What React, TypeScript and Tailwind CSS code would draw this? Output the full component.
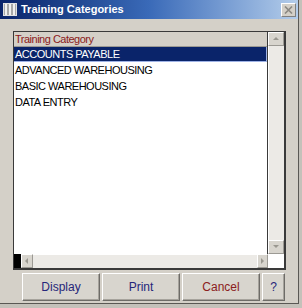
import React from "react";

const categories = ["ACCOUNTS PAYABLE", "ADVANCED WAREHOUSING", "BASIC WAREHOUSING", "DATA ENTRY"];

function Arrow({ dir }: { dir: "up" | "down" | "left" | "right" }) {
  const points = {
    up: "1,5 4,2 7,5",
    down: "1,2 4,5 7,2",
    left: "5,1 2,4 5,7",
    right: "2,1 5,4 2,7",
  }[dir];
  return (
    <svg width="8" height="8" viewBox="0 0 8 8">
      <polygon points={points} fill="#9a9890" />
    </svg>
  );
}

function ScrollButton({ dir, className }: { dir: "up" | "down" | "left" | "right"; className: string }) {
  return (
    <div
      className={`flex items-center justify-center border border-t-white border-l-white border-r-[#9c9a94] border-b-[#9c9a94] bg-[#d8d5ce] ${className}`}
    >
      <Arrow dir={dir} />
    </div>
  );
}

function DialogButton({ label, width, color }: { label: string; width: string; color: string }) {
  return (
    <button
      type="button"
      className={`flex h-[28px] items-center justify-center border border-t-white border-l-white border-r-[#6e6c68] border-b-[#6e6c68] bg-[#d8d5ce] text-[12px] shadow-[inset_-1px_-1px_0_#a6a39c] ${width} ${color}`}
    >
      {label}
    </button>
  );
}

export default function App() {
  return (
    <div className="h-[308px] w-[302px] bg-[#c4c1ba] font-['Liberation_Sans',Arial,sans-serif]">
      <div className="flex h-[304px] w-[299px] flex-col border-r border-b border-[#5a5854] bg-[#d4d0c8]">
        {/* title bar */}
        <div className="flex h-[19px] shrink-0 items-center bg-linear-to-r from-[#0a246a] via-[#3a6ab8] to-[#b4cdea]">
          <div className="ml-[3px] flex h-[13px] w-[14px] gap-[2px] border border-[#e0e0e0] bg-[#a8a8a8] px-[1px]">
            <span className="h-full w-[2px] bg-[#f0f0f0]" />
            <span className="h-full w-[2px] bg-[#f0f0f0]" />
            <span className="h-full w-[2px] bg-[#f0f0f0]" />
          </div>
          <span className="ml-[4px] text-[11px] font-bold text-white">Training Categories</span>
          <div className="ml-auto mr-[2px] flex h-[14px] w-[15px] items-center justify-center border border-t-white border-l-white border-r-[#808080] border-b-[#808080] bg-[#d4d0c8]">
            <svg width="9" height="8" viewBox="0 0 9 8">
              <path d="M1 0.5 L8 7.5 M8 0.5 L1 7.5" stroke="#8a8882" strokeWidth="1.6" />
            </svg>
          </div>
        </div>

        {/* list box */}
        <div className="ml-[13px] mt-[12px] flex h-[239px] w-[273px] flex-col border border-r-2 border-b-2 border-[#3a3a3a] tracking-[-0.5px]">
          <div className="flex h-[223px]">
            <div className="flex-1 bg-white text-[11px]">
              <div className="flex h-[15px] items-center border-b border-[#9c9a94] bg-[#d4d0c8] pl-[1px] text-[#8b1a1a]">
                Training Category
              </div>
              {categories.map((name, i) => (
                <div
                  key={name}
                  className={
                    i === 0
                      ? "flex h-[15px] items-center border-r border-b border-[#9fb3e6] bg-[#0a246a] pl-[1px] text-white"
                      : "flex h-[16px] items-center pl-[1px] text-black"
                  }
                >
                  {name}
                </div>
              ))}
            </div>
            <div className="flex w-[17px] flex-col border-l border-[#3a3a3a] bg-[#eceae6]">
              <ScrollButton dir="up" className="h-[14px]" />
              <div className="flex-1 border-l border-white" />
              <ScrollButton dir="down" className="h-[14px]" />
            </div>
          </div>
          <div className="flex h-[14px]">
            <div className="w-[7px] bg-black" />
            <ScrollButton dir="left" className="w-[12px]" />
            <div className="flex-1 border-t border-white bg-[#eceae6]" />
            <ScrollButton dir="right" className="w-[11px]" />
            <div className="w-[16px] bg-white" />
          </div>
        </div>

        {/* buttons */}
        <div className="ml-[22px] mt-[3px] flex gap-[2px]">
          <DialogButton label="Display" width="w-[78px]" color="text-[#26267a]" />
          <DialogButton label="Print" width="w-[78px]" color="text-[#26267a]" />
          <DialogButton label="Cancel" width="w-[78px]" color="text-[#8b2020]" />
          <DialogButton label="?" width="w-[23px]" color="text-[#26267a]" />
        </div>
      </div>
    </div>
  );
}
